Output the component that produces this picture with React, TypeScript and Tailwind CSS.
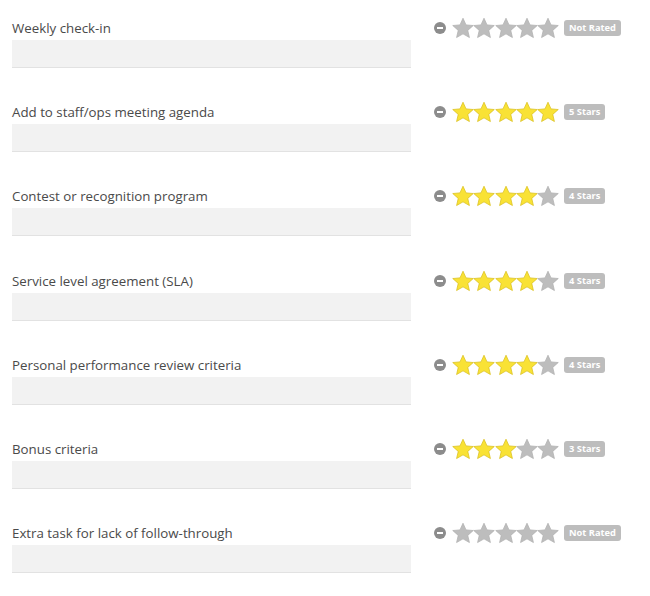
import { Fragment } from "react";

const items = [
  { label: "Weekly check-in", rating: 0 },
  { label: "Add to staff/ops meeting agenda", rating: 5 },
  { label: "Contest or recognition program", rating: 4 },
  { label: "Service level agreement (SLA)", rating: 4 },
  { label: "Personal performance review criteria", rating: 4 },
  { label: "Bonus criteria", rating: 3 },
  { label: "Extra task for lack of follow-through", rating: 0 },
];

const Star = ({ on }: { on: boolean }) => (
  <svg width="22" height="22" viewBox="0 0 24 23" className="-mx-[0.3px]">
    <path
      d="M12 0.8l3.3 7.3 7.9.7-6 5.3 1.8 7.8L12 17.9l-7 4 1.8-7.8-6-5.3 7.9-.7z"
      fill={on ? "#f9e235" : "#bdbdbd"}
      stroke={on ? "#d9bf1c" : "#b0b0b0"}
      strokeWidth="0.8"
      strokeLinejoin="round"
    />
  </svg>
);

const Rating = ({ value }: { value: number }) => (
  <div className="flex items-center h-5">
    {/* clear icon */}
    <span className="w-3 h-3 rounded-full bg-[#8c8c8c] flex items-center justify-center mr-[6px]">
      <span className="w-[6px] h-[2px] bg-white" />
    </span>
    {[1, 2, 3, 4, 5].map((n) => (
      <Star key={n} on={n <= value} />
    ))}
    <span className="ml-[5px] h-4 px-[5px] rounded-[3px] bg-[#bdbdbd] text-white text-[9.3px] font-bold leading-4">
      {value ? `${value} Stars` : "Not Rated"}
    </span>
  </div>
);

export default function App() {
  return (
    <div className="w-[650px] h-[596px] bg-white font-['Open_Sans',sans-serif] text-[#4a4a4a]">
      {items.map((item, i) => (
        <Fragment key={i}>
          <div className="flex h-[84.2px] pt-[18px] pl-3">
            <div className="w-[399px]">
              <p className="text-[13.3px] leading-5 mb-[2px]">{item.label}</p>
              <div className="h-[28px] bg-[#f2f2f2] border-b border-[#e2e2e2]" />
            </div>
            <div className="ml-[23px]">
              <Rating value={item.rating} />
            </div>
          </div>
        </Fragment>
      ))}
    </div>
  );
}
